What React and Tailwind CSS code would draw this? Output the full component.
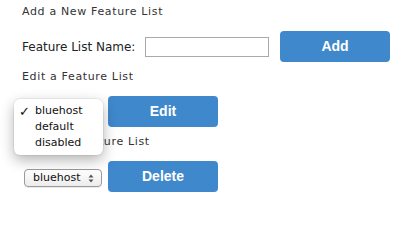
import React from 'react'

const SANS = { fontFamily: '"DejaVu Sans", Verdana, sans-serif' }

function Heading({ children, className = '' }) {
  return (
    <div className={`h-[25px] flex items-center text-[11px] tracking-[0.65px] text-[#333] ${className}`}>
      {children}
    </div>
  )
}

function BlueButton({ children }) {
  return (
    <button
      className="w-[110px] h-[31px] rounded-[4px] bg-[#3f88cb] text-white text-[14px] font-bold flex items-center justify-center"
      style={{ fontFamily: '"Liberation Sans", Arial, sans-serif' }}
    >
      {children}
    </button>
  )
}

function Arrows() {
  return (
    <svg width="6" height="9" viewBox="0 0 6 9">
      <path d="M3 0.5 L5.5 3.5 L0.5 3.5 Z" fill="#555" />
      <path d="M3 8.5 L5.5 5.5 L0.5 5.5 Z" fill="#555" />
    </svg>
  )
}

function FakeSelect({ value }) {
  return (
    <div className="w-[78px] h-[18px] rounded-[4px] border border-[#9a9a9a] bg-gradient-to-b from-white to-[#ececec] flex items-center pl-[8px] pr-[7px] text-[11px] text-[#111] shadow-[0_1px_0_rgba(0,0,0,0.08)]">
      <span className="flex-1">{value}</span>
      <Arrows />
    </div>
  )
}

const OPTIONS = ['bluehost', 'default', 'disabled']

function Menu() {
  return (
    <div className="absolute left-[-10px] top-[-5px] z-10 w-[89px] h-[56px] rounded-[6px] bg-white pt-[4px] shadow-[0_5px_14px_rgba(0,0,0,0.3),0_0_0_1px_rgba(0,0,0,0.05)]">
      {OPTIONS.map((o, i) => (
        <div key={o} className="h-[16px] flex items-center text-[11px] text-[#111]">
          <span className="w-[21px] pl-[5px] text-[13px] font-bold leading-none">{i === 0 ? '✓' : ''}</span>
          {o}
        </div>
      ))}
    </div>
  )
}

export default function App() {
  return (
    <div className="w-[410px] h-[200px] bg-white pl-[22px] overflow-hidden" style={SANS}>
      <Heading>Add a New Feature List</Heading>
      <div className="mt-[6px] h-[31px] flex items-center">
        <span className="w-[123px] text-[12px] text-[#222]">Feature List Name:</span>
        <div className="w-[124px] h-[20px] border border-[#a9a9a9] bg-white" />
        <div className="ml-[11px]">
          <BlueButton>Add</BlueButton>
        </div>
      </div>

      <Heading className="mt-[3px]">Edit a Feature List</Heading>
      <div className="mt-[6px] h-[31px] flex items-start">
        <div className="relative ml-[2px] mt-[8px]">
          <FakeSelect value="bluehost" />
          <Menu />
        </div>
        <div className="ml-[6px]">
          <BlueButton>Edit</BlueButton>
        </div>
      </div>

      <Heading className="mt-[3px]">Delete a Feature List</Heading>
      <div className="mt-[6px] h-[31px] flex items-start">
        <div className="ml-[2px] mt-[8px]">
          <FakeSelect value="bluehost" />
        </div>
        <div className="ml-[6px]">
          <BlueButton>Delete</BlueButton>
        </div>
      </div>
    </div>
  )
}
